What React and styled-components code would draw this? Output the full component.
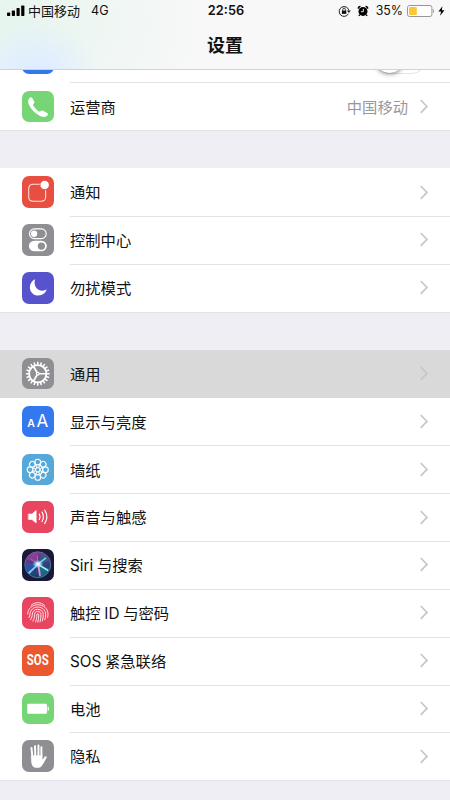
import React from 'react';
import styled, { createGlobalStyle } from 'styled-components';

const GlobalStyle = createGlobalStyle`
  body {
    margin: 0;
    overflow: hidden;
    background: #efeef4;
    color: #111;
    font-family: Inter, "Noto Sans CJK SC", sans-serif;
  }
`;

const Screen = styled.div`
  width: 450px;
  height: 800px;
  overflow: hidden;
`;

const Header = styled.header`
  position: relative;
  box-sizing: border-box;
  height: 70px;
  border-bottom: 1px solid #d2d2d6;
  background:
    radial-gradient(ellipse 62px 50px at 36px 72px, #dcebff 0%, rgba(225, 238, 255, 0.7) 50%, rgba(240, 246, 252, 0) 100%),
    radial-gradient(ellipse 200px 130px at 10px 25px, #e6f5ee 0%, rgba(248, 248, 248, 0) 100%),
    #f8f8f8;
`;

const StatusBar = styled.div`
  display: grid;
  grid-template-columns: 1fr auto 1fr;
  align-items: center;
  height: 22px;
  padding: 0 5px 0 7px;
  font-size: 12.6px;
  line-height: 22px;
`;

const StatusSide = styled.div`
  display: flex;
  align-items: center;
  justify-content: ${props => (props.$end ? 'flex-end' : 'flex-start')};
`;

const Carrier = styled.span`
  margin: 0 11px 0 3px;
  font-size: 13px;
`;

const Time = styled.div`
  font-size: 12.8px;
  font-weight: 600;
`;

const Percent = styled.span`
  margin: 0 4px 0 7px;
  font-size: 12.4px;
`;

const Title = styled.h1`
  margin: 0;
  font-size: 18px;
  font-weight: 700;
  line-height: 47px;
  text-align: center;
`;

const Group = styled.section`
  margin-bottom: 38px;
  background: #fff;
  box-shadow: 0 0.5px 0 #d4d4d8;
`;

const CutRow = styled.div`
  box-sizing: border-box;
  display: flex;
  align-items: flex-end;
  justify-content: space-between;
  height: 12.4px;
  padding: 0 22px 8.4px 22px;
  overflow: hidden;
`;

const Toggle = styled.div`
  box-sizing: border-box;
  width: 55px;
  height: 34px;
  border: 1.5px solid #e6e6e8;
  border-radius: 17px;

  &::before {
    content: '';
    display: block;
    width: 31px;
    height: 31.5px;
    border-radius: 50%;
    background: #fff;
    box-shadow: 0 1px 4px rgba(0, 0, 0, 0.45);
  }
`;

const Row = styled.div`
  display: flex;
  height: 47.83px;
  padding-left: 22px;
  background: ${props => (props.$active ? '#d9d9d9' : 'transparent')};
`;

const Body = styled.div`
  box-sizing: border-box;
  display: flex;
  flex: 1;
  align-items: center;
  margin-left: 16.5px;
  padding-right: 21px;
  border-top: 1px solid ${props => (props.$line ? '#e3e3e6' : 'transparent')};
`;

const Label = styled.span`
  flex: 1;
  padding-top: 1.5px;
  font-size: 15.3px;
  line-height: 24px;
  word-spacing: -0.6px;
`;

const Value = styled.span`
  margin-right: 11px;
  padding-top: 1.5px;
  color: #98989c;
  font-size: 15.3px;
  line-height: 24px;
`;

const Tile = styled.div`
  align-self: center;
  display: flex;
  flex: none;
  width: 31.5px;
  height: 31.5px;
  border-radius: 7px;
  overflow: hidden;
  background: ${props => props.$color};

  svg {
    display: block;
    width: 100%;
    height: 100%;
  }
`;

const CutTile = styled(Tile)`
  align-self: flex-end;
`;

const TileText = styled.div`
  width: 100%;
  color: #fff;
  font-family: Roboto, sans-serif;
  font-size: 15px;
  font-weight: 700;
  line-height: 31px;
  text-align: center;
  transform: scaleX(0.76);
  white-space: nowrap;
`;

const Letters = styled.div`
  display: flex;
  align-items: baseline;
  justify-content: center;
  gap: 1.5px;
  width: 100%;
  color: #fff;
  font-size: 17px;
  line-height: 30px;

  small {
    font-size: 10.5px;
    font-weight: 600;
  }
`;

const ICON = { viewBox: '0 0 32 32', fill: 'none' };

function Signal() {
  return (
    <svg width="18" height="12" viewBox="0 0 18 12">
      <rect x="0" y="7.5" width="3.2" height="3.5" rx="0.7" />
      <rect x="4.8" y="5.5" width="3.2" height="5.5" rx="0.7" />
      <rect x="9.5" y="3" width="3.2" height="8" rx="0.7" />
      <rect x="14.2" y="0.5" width="3.2" height="10.5" rx="0.7" />
    </svg>
  );
}

function RotationLock() {
  return (
    <svg width="13" height="13" viewBox="0 0 13 13" fill="none" stroke="#222">
      <path d="M10.4 8.8A4.9 4.9 0 1 1 10.9 5.6" />
      <path d="M8.9 5.5h3.9l-1.9 2.4z" fill="#222" stroke="none" />
      <rect x="3.9" y="5.6" width="4.4" height="3.3" fill="#111" stroke="none" />
      <path d="M4.8 6V4.5a1.3 1.3 0 0 1 2.6 0V6" strokeWidth="0.9" />
    </svg>
  );
}

function Alarm() {
  return (
    <svg width="12" height="12" viewBox="0 0 12 12" style={{ marginLeft: 6 }}>
      <circle cx="6" cy="6.4" r="4.5" />
      <path d="M.6 3.4Q.7.9 3.4.8L3.7 1.5 1.3 3.9zM11.4 3.4Q11.3.9 8.6.8L8.3 1.5l2.4 2.4z" />
      <path d="m2.8 9.6-.9 1.3M9.2 9.6l.9 1.3" stroke="#000" strokeWidth="1.4" />
      <path d="M6.3 3.8v2.9H3.9" fill="none" stroke="#fff" strokeWidth="0.9" />
    </svg>
  );
}

function Battery() {
  return (
    <svg width="27" height="12" viewBox="0 0 27 12">
      <rect x="0.5" y="0.5" width="24.4" height="11" rx="2" fill="#fff" stroke="#96969a" />
      <rect x="2" y="2" width="7.8" height="8" rx="0.8" fill="#fcc733" />
      <path d="M25.9 4v4c1.4-.5 1.4-3.5 0-4z" fill="#96969a" />
    </svg>
  );
}

function Bolt() {
  return (
    <svg width="7" height="12" viewBox="0 0 8 12" style={{ marginLeft: 4 }}>
      <path d="M5 .5.5 6.7h3L2.4 11.5l5-6.4h-3z" />
    </svg>
  );
}

function Chevron({ faded }) {
  return (
    <svg width="10" height="16" viewBox="0 0 10 16" fill="none" stroke={faded ? '#c7c7c9' : '#c7c7cb'} strokeWidth="1.7">
      <path d="m1.7 1 6.3 6.4-6.3 6.4" />
    </svg>
  );
}

function PhoneIcon() {
  return (
    <svg {...ICON}>
      <path d="M6.5 8.8C7.7 6 9.5 5.6 10.4 7.1l1.9 3.2c.9 1.5-.2 2.2-1.2 3.3-.7.8 5.9 8 7 7.3 1.3-.7 1.8-1.7 3.3-.9l4.2 2.4c1.6 1 .6 2.3-.8 3.2-2.6 1.5-5.8.5-9.3-1.9-3.6-2.6-7.3-6.6-8.7-10.5-.6-1.7-.7-3.2-.3-4.4z" fill="#fff" />
    </svg>
  );
}

function NotificationIcon() {
  return (
    <svg {...ICON}>
      <path d="M18 8.4h-6.6c-3.5 0-4.6 1.2-4.6 4.6v8c0 3.5 1.1 4.6 4.6 4.6h8c3.5 0 4.6-1.1 4.6-4.6v-6.6" stroke="#ffe0dc" strokeWidth="1.1" />
      <circle cx="23" cy="9.2" r="4.3" fill="#fff" />
    </svg>
  );
}

function ControlIcon() {
  return (
    <svg {...ICON}>
      <rect x="7.6" y="5" width="17" height="9.8" rx="4.9" stroke="#fff" strokeWidth="1.2" />
      <circle cx="12.3" cy="9.9" r="3.2" fill="#fff" />
      <rect x="7" y="17" width="18.2" height="10.8" rx="5.4" fill="#fff" />
      <circle cx="19.7" cy="22.4" r="3.7" fill="#8e8e93" />
    </svg>
  );
}

function MoonIcon() {
  return (
    <svg {...ICON}>
      <path d="M13.4 7.3C4.8 11.4 7.1 23.9 16.6 23.9c4.1 0 7.3-2.2 8.5-6-7.6 3.7-14.5-2.9-11.7-10.6z" fill="#fff" />
    </svg>
  );
}

function GearIcon() {
  const teeth = Array.from({ length: 20 }, (_, i) => i * 18);
  return (
    <svg {...ICON} stroke="#fff">
      <circle cx="16" cy="16" r="8.8" strokeWidth="1.9" />
      {teeth.map(angle => (
        <path key={angle} d="M16 7.2V3.9" strokeWidth="1.6" transform={`rotate(${angle} 16 16)`} />
      ))}
      <path d="M16 16h8.7M16 16l-4.4-7.6M16 16l-4.4 7.6" strokeWidth="1.7" />
      <circle cx="16" cy="16" r="1.4" strokeWidth="1.2" fill="#8e8e93" />
    </svg>
  );
}

function WallpaperIcon() {
  const petals = [0, 45, 90, 135, 180, 225, 270, 315];
  return (
    <svg {...ICON} stroke="#fff">
      {petals.map(angle => (
        <g key={angle} transform={`rotate(${angle} 16 16)`}>
          <circle cx="16" cy="8.2" r="2.9" strokeWidth="1.1" />
          <circle cx="16" cy="12.3" r="1.7" strokeWidth="0.7" />
        </g>
      ))}
      <circle cx="16" cy="16" r="2.3" strokeWidth="1" />
    </svg>
  );
}

function SoundIcon() {
  return (
    <svg {...ICON} stroke="#fff" strokeLinecap="round">
      <path d="M6.7 13.2h3.4l4.3-3.6v12.8l-4.3-3.6H6.7z" fill="#fff" strokeWidth=".6" />
      <path d="M17.6 13.3q1.4 2.7 0 5.4M20.4 11.2q2.7 4.8 0 9.6M23.1 9.2q4.4 6.8 0 13.6" strokeWidth="1.2" />
    </svg>
  );
}

function SiriIcon() {
  return (
    <svg {...ICON}>
      <defs>
        <linearGradient id="orb" x1="0.35" y1="0" x2="0.6" y2="1">
          <stop offset="0" stopColor="#8f3192" />
          <stop offset="0.45" stopColor="#443a83" />
          <stop offset="0.8" stopColor="#1c4776" />
          <stop offset="1" stopColor="#173760" />
        </linearGradient>
        <radialGradient id="glow">
          <stop offset="0" stopColor="#fff" />
          <stop offset="0.35" stopColor="#d4fbff" stopOpacity="0.85" />
          <stop offset="1" stopColor="#59baff" stopOpacity="0" />
        </radialGradient>
      </defs>
      <circle cx="16" cy="16" r="13.2" fill="url(#orb)" stroke="#6b7f9f" strokeWidth="0.8" />
      <path d="M5 11Q9 3 16 4l1 11z" fill="#a04a9b" opacity=".5" />
      <path d="M16.5 15 20 4.5q6 2 7.5 8z" fill="#286b88" opacity=".7" />
      <path d="M15.5 15 5 24q-3-5-1-10z" fill="#275db9" opacity=".6" />
      <path d="m16 15 12 6q-4 8-11 8z" fill="#1b8c99" opacity=".5" />
      <path d="M16.3 14.6 6 23.8l1.6 1.5 9.3-9.3z" fill="#79cfff" />
      <path d="m16 14.4 11 6.6-.8 1.5-10.5-6.2z" fill="#93f8e7" />
      <path d="m15.4 15 8.6-6.6.8 1.2-8.6 6.6z" fill="#75dce3" />
      <path d="m15.3 15 2.3 12.6 1.6-.5-1.7-12z" fill="#ee86da" />
      <path d="m16 15-7-5M16 15l-.4-8" stroke="#dc83cb" strokeWidth=".7" opacity=".8" />
      <ellipse cx="16.2" cy="15.3" rx="6" ry="4.4" fill="url(#glow)" />
    </svg>
  );
}

function FingerprintIcon() {
  return (
    <svg {...ICON} stroke="#ffe5e9" strokeWidth="1" strokeLinecap="round">
      <path d="M9.2 8.5c4-3.7 9.8-3.7 13.7 0" />
      <path d="M5.8 17.3C5.7 12 10.2 7.9 16 7.9c6 0 10.4 4 10.4 9.4 0 1.2-.1 2.4-.4 3.4" />
      <path d="M7.1 20.9c.7-1.3 1-2.6 1-3.8.3-3.9 3.6-6.9 7.9-6.9 4.6 0 8 3.1 8 7.3 0 2-.2 3.9-.8 5.6" />
      <path d="M8.7 23c1.3-1.8 1.7-3.9 1.8-5.8.3-2.8 2.5-4.7 5.5-4.7 3.4 0 5.6 2.2 5.6 5.2 0 2.4-.3 4.9-.9 6.7" />
      <path d="M11.1 24.5c1.3-2.2 1.7-4.8 1.7-7 .1-1.7 1.4-2.8 3.2-2.8 2 0 3.3 1.2 3.3 3.1 0 2.8-.3 5.3-1 7.5" />
      <path d="M13.8 25.3c1-2.3 1.3-4.7 1.3-7.3 0-.7.3-1 .9-1s1 .4 1 1.1c0 2.8-.3 5.2-1 7.5" />
    </svg>
  );
}

function BatteryIcon() {
  return (
    <svg {...ICON}>
      <rect x="5.3" y="11" width="20" height="10" rx="1" fill="#fff" />
      <path d="M26 13.6v4.6c2-.4 2-4.2 0-4.6z" fill="#fff" />
    </svg>
  );
}

function HandIcon() {
  return (
    <svg {...ICON} stroke="#fff" strokeLinecap="round">
      <path d="m10.6 17.5-1-9.5M13.5 16l-.3-9.6M16.7 16V5.6M19.7 16.5V7.4" strokeWidth="2" />
      <path d="M9.3 15.7h11.4v4.7l2.4-3.3c.8-1 2.4-.6 1.9.6l-3.8 7c-1.7 3-3.3 3.6-5.9 3.6-4.4 0-5.6-3-5.9-7z" fill="#fff" strokeWidth="0.2" />
    </svg>
  );
}

const GROUPS = [
  [
    { label: '通知', color: '#e94f40', icon: <NotificationIcon /> },
    { label: '控制中心', color: '#8e8e93', icon: <ControlIcon /> },
    { label: '勿扰模式', color: '#5653cd', icon: <MoonIcon /> },
  ],
  [
    { label: '通用', color: '#8e8e93', icon: <GearIcon />, active: true },
    { label: '显示与亮度', color: '#3478f0', icon: <Letters><small>A</small>A</Letters> },
    { label: '墙纸', color: '#55a8d8', icon: <WallpaperIcon /> },
    { label: '声音与触感', color: '#e84660', icon: <SoundIcon /> },
    { label: 'Siri 与搜索', color: '#171936', icon: <SiriIcon /> },
    { label: '触控 ID 与密码', color: '#e84660', icon: <FingerprintIcon /> },
    { label: 'SOS 紧急联络', color: '#eb582f', icon: <TileText>SOS</TileText> },
    { label: '电池', color: '#76d675', icon: <BatteryIcon /> },
    { label: '隐私', color: '#8e8e93', icon: <HandIcon /> },
  ],
];

function SettingRow({ label, value, color, icon, active, line }) {
  return (
    <Row $active={active}>
      <Tile $color={color}>{icon}</Tile>
      <Body $line={line}>
        <Label>{label}</Label>
        {value && <Value>{value}</Value>}
        <Chevron faded={active} />
      </Body>
    </Row>
  );
}

export default function App() {
  return (
    <Screen>
      <GlobalStyle />
      <Header>
        <StatusBar>
          <StatusSide>
            <Signal />
            <Carrier>中国移动</Carrier>
            <span>4G</span>
          </StatusSide>
          <Time>22:56</Time>
          <StatusSide $end>
            <RotationLock />
            <Alarm />
            <Percent>35%</Percent>
            <Battery />
            <Bolt />
          </StatusSide>
        </StatusBar>
        <Title>设置</Title>
      </Header>
      <Group>
        <CutRow>
          <CutTile $color="#3478e8" />
          <Toggle />
        </CutRow>
        <SettingRow label="运营商" value="中国移动" color="#76d675" icon={<PhoneIcon />} line />
      </Group>
      {GROUPS.map((rows, i) => (
        <Group key={i}>
          {rows.map((row, j) => (
            <SettingRow key={row.label} {...row} line={j > 0 && !rows[j - 1].active} />
          ))}
        </Group>
      ))}
    </Screen>
  );
}
